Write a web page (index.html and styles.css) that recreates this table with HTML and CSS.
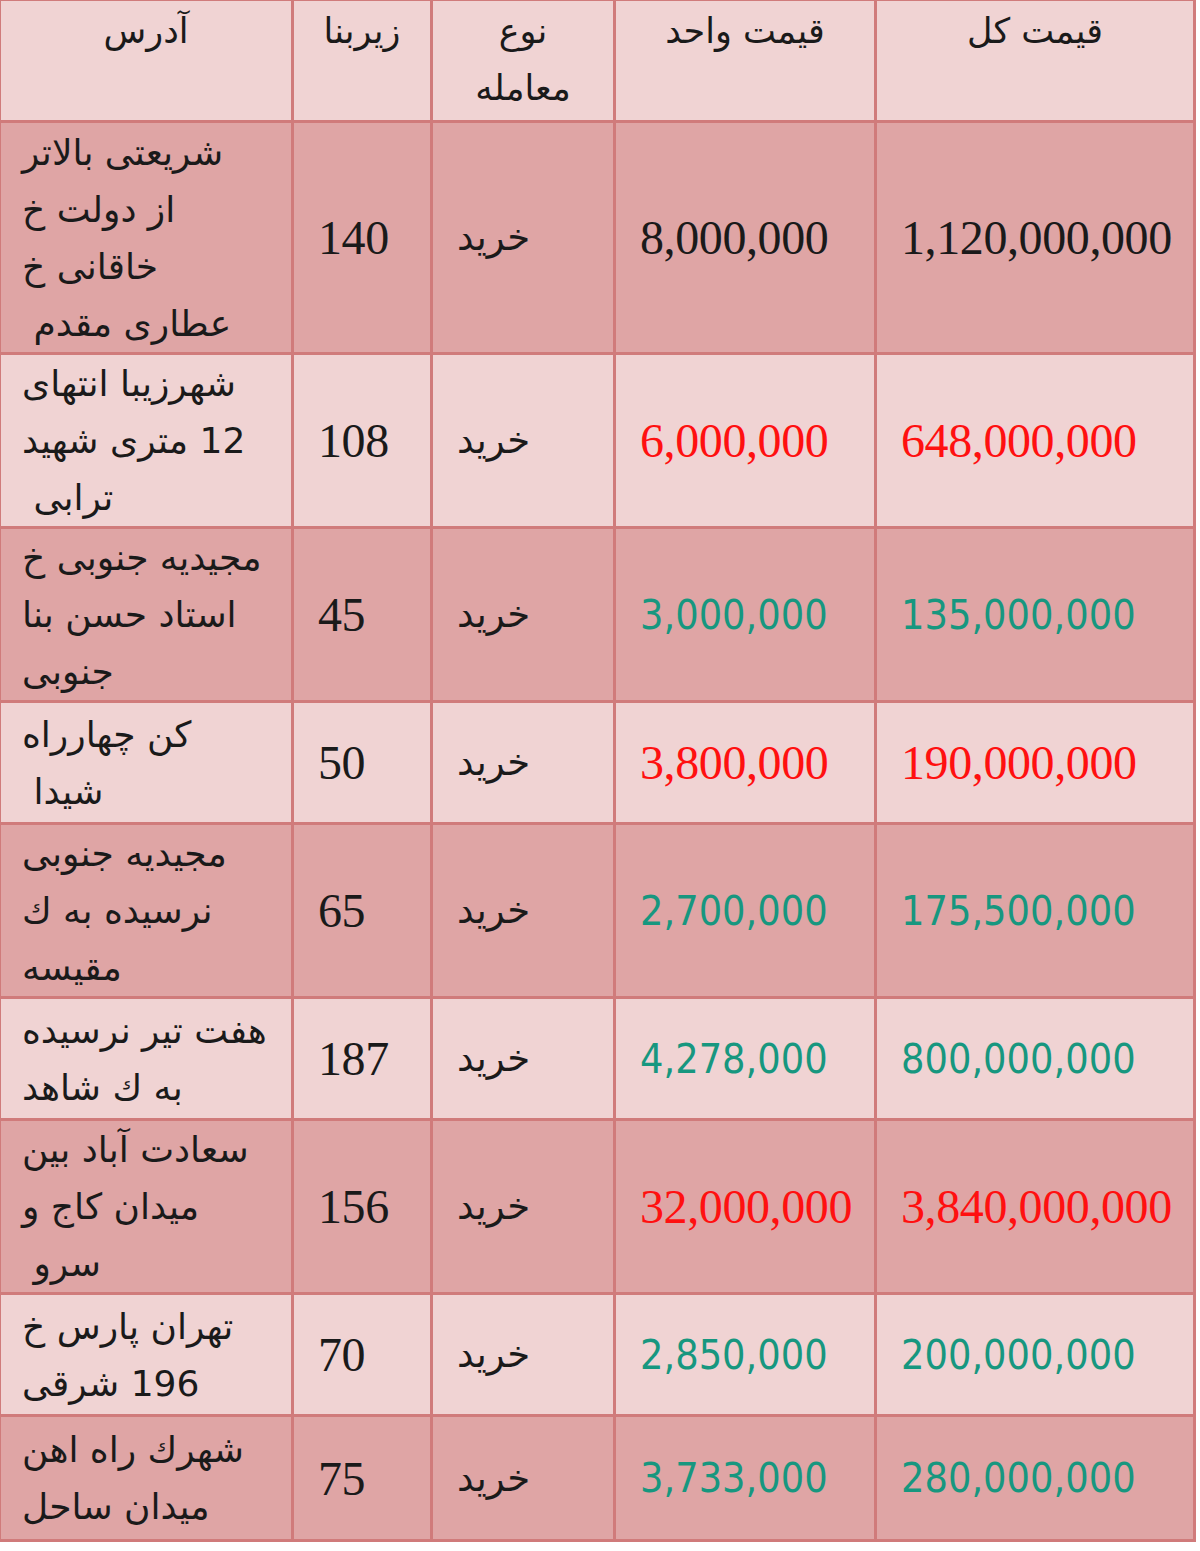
FILE: index.html
```html
<!DOCTYPE html>
<html lang="fa">
<head>
<meta charset="utf-8">
<title>قیمت آپارتمان</title>
<link rel="stylesheet" href="styles.css">
</head>
<body>
<table class="prices">
  <colgroup>
    <col class="c-addr"><col class="c-area"><col class="c-type"><col class="c-unit"><col class="c-total">
  </colgroup>
  <thead>
    <tr class="light h-head">
      <th dir="rtl">آدرس</th>
      <th dir="rtl">زیربنا</th>
      <th dir="rtl">نوع<br>معامله</th>
      <th dir="rtl">قیمت واحد</th>
      <th dir="rtl">قیمت کل</th>
    </tr>
  </thead>
  <tbody>
    <tr class="dark h4">
      <td class="addr" dir="rtl">شریعتی بالاتر<br>از دولت خ<br>خاقانی خ<br>عطاری مقدم&nbsp;</td>
      <td class="num">140</td>
      <td class="fa" dir="rtl">خرید</td>
      <td class="num">8,000,000</td>
      <td class="num">1,120,000,000</td>
    </tr>
    <tr class="light h3">
      <td class="addr" dir="rtl">شهرزیبا انتهای<br>12 متری شهید<br>ترابی&nbsp;</td>
      <td class="num">108</td>
      <td class="fa" dir="rtl">خرید</td>
      <td class="num red">6,000,000</td>
      <td class="num red">648,000,000</td>
    </tr>
    <tr class="dark h3">
      <td class="addr" dir="rtl">مجیدیه جنوبی خ<br>استاد حسن بنا<br>جنوبی</td>
      <td class="num">45</td>
      <td class="fa" dir="rtl">خرید</td>
      <td class="num green">3,000,000</td>
      <td class="num green">135,000,000</td>
    </tr>
    <tr class="light h2">
      <td class="addr" dir="rtl">کن چهارراه<br>شیدا&nbsp;</td>
      <td class="num">50</td>
      <td class="fa" dir="rtl">خرید</td>
      <td class="num red">3,800,000</td>
      <td class="num red">190,000,000</td>
    </tr>
    <tr class="dark h3">
      <td class="addr" dir="rtl">مجیدیه جنوبی<br>نرسیده به ك<br>مقیسه</td>
      <td class="num">65</td>
      <td class="fa" dir="rtl">خرید</td>
      <td class="num green">2,700,000</td>
      <td class="num green">175,500,000</td>
    </tr>
    <tr class="light h2">
      <td class="addr" dir="rtl">هفت تیر نرسیده<br>به ك شاهد</td>
      <td class="num">187</td>
      <td class="fa" dir="rtl">خرید</td>
      <td class="num green">4,278,000</td>
      <td class="num green">800,000,000</td>
    </tr>
    <tr class="dark h3">
      <td class="addr" dir="rtl">سعادت آباد بین<br>میدان کاج و<br>سرو&nbsp;</td>
      <td class="num">156</td>
      <td class="fa" dir="rtl">خرید</td>
      <td class="num red">32,000,000</td>
      <td class="num red">3,840,000,000</td>
    </tr>
    <tr class="light h2">
      <td class="addr" dir="rtl">تهران پارس خ<br>196 شرقی</td>
      <td class="num">70</td>
      <td class="fa" dir="rtl">خرید</td>
      <td class="num green">2,850,000</td>
      <td class="num green">200,000,000</td>
    </tr>
    <tr class="dark h2b">
      <td class="addr" dir="rtl">شهرك راه اهن<br>میدان ساحل</td>
      <td class="num">75</td>
      <td class="fa" dir="rtl">خرید</td>
      <td class="num green">3,733,000</td>
      <td class="num green">280,000,000</td>
    </tr>
  </tbody>
</table>
</body>
</html>
```
FILE: styles.css
```css
html, body {
  margin: 0;
  padding: 0;
  background: #ffffff;
}

.prices {
  border-collapse: collapse;
  table-layout: fixed;
  width: 1195px;
  margin-top: -2px;
  margin-left: -2px;
  font-family: "Liberation Serif", "DejaVu Sans", serif;
  color: #1a1a1a;
}

.c-addr { width: 293px; }
.c-area { width: 139px; }
.c-type { width: 183px; }
.c-unit { width: 261px; }
.c-total { width: 319px; }

.prices th,
.prices td {
  border: 3px solid #d07b7b;
  padding: 0 0 0 24px;
  vertical-align: middle;
  text-align: left;
  overflow: hidden;
  white-space: nowrap;
}

.prices th {
  font-family: "DejaVu Sans", sans-serif;
  font-weight: normal;
  font-size: 35px;
  line-height: 57px;
  text-align: center;
  vertical-align: top;
  padding: 2px 0 0 0;
}

.light { background: #f0d3d3; }
.dark { background: #dfa5a5; }

.h-head { height: 122px; }
.h4 { height: 232px; }
.h3 { height: 174px; }
.h2 { height: 122px; }
.h2b { height: 125px; }

.addr {
  font-family: "DejaVu Sans", sans-serif;
  font-size: 36px;
  line-height: 57px;
  text-align: left;
}

.prices td.addr {
  padding-left: 21px;
  text-align: left;
}

.fa {
  font-family: "DejaVu Sans", sans-serif;
  font-size: 37px;
}

.prices td.fa {
  text-align: left;
}

.num {
  font-size: 48px;
  letter-spacing: -0.4px;
}

.red { color: #ff1010; }

.green {
  color: #17977f;
  font-family: "DejaVu Sans Condensed", "Liberation Sans", sans-serif;
  font-size: 41px;
  letter-spacing: 0;
}
```
